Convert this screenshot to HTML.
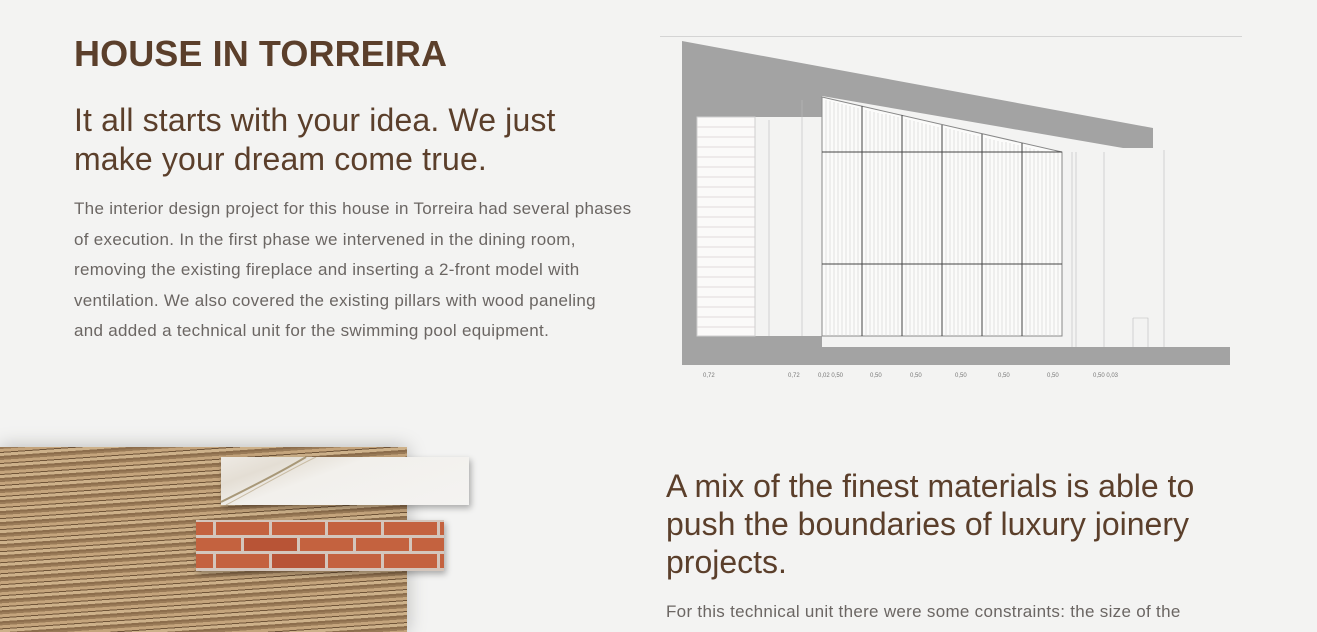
<!DOCTYPE html>
<html><head><meta charset="utf-8"><style>
html,body{margin:0;padding:0;width:1317px;height:632px;overflow:hidden;background:#f3f3f2;font-family:"Liberation Sans",sans-serif;position:relative}
.a{position:absolute;white-space:nowrap}
h1{position:absolute;left:74px;top:33px;margin:0;font-size:36px;font-weight:bold;color:#5b3f2b;letter-spacing:0.1px}
.h2{color:#5b3f2b;font-size:32px;line-height:39px;letter-spacing:0.15px}
.p{color:#6b6663;font-size:17px;line-height:30.5px;letter-spacing:0.3px}
</style></head><body>
<h1>HOUSE IN TORREIRA</h1>
<div class="a h2" style="left:74px;top:101px">It all starts with your idea. We just<br>make your dream come true.</div>
<div class="a p" style="left:74px;top:194px">The interior design project for this house in Torreira had several phases<br>of execution. In the first phase we intervened in the dining room,<br>removing the existing fireplace and inserting a 2-front model with<br>ventilation. We also covered the existing pillars with wood paneling<br>and added a technical unit for the swimming pool equipment.</div>

<svg class="a" style="left:0;top:0" width="1317" height="632">
<line x1="660" y1="36.5" x2="1242" y2="36.5" stroke="#d4d4d4"/>
<path d="M682 41 L1153 128 L1153 148 L1123 148 L822 96 L822 117 L697 117 L697 336 L822 336 L822 347 L1230 347 L1230 365 L682 365 Z" fill="#a3a3a3"/>
<rect x="697" y="117" width="58" height="219" fill="#fbfaf9" stroke="#cfcfcf"/>
<g stroke="#d8d0cf" stroke-width="0.7">
<path d="M697 127H755M697 137H755M697 147H755M697 157H755M697 167H755M697 177H755M697 187H755M697 197H755M697 207H755M697 217H755M697 227H755M697 237H755M697 247H755M697 257H755M697 267H755M697 277H755M697 287H755M697 297H755M697 307H755M697 317H755M697 327H755"/>
</g>
<path d="M822 97 L1062 152 L1062 336 L822 336 Z" fill="#fbfbfa" stroke="#888"/>
<g stroke="#cfcfcf" stroke-width="0.6">
<path d="M826 100V336M830 101V336M834 102V336M838 103V336M842 104V336M846 105V336M850 106V336M854 107V336M858 108V336M866 110V336M870 111V336M874 112V336M878 113V336M882 114V336M886 114V336M890 115V336M894 116V336M898 117V336M906 119V336M910 120V336M914 121V336M918 122V336M922 123V336M926 124V336M930 125V336M934 126V336M938 127V336M946 128V336M950 129V336M954 130V336M958 131V336M962 132V336M966 133V336M970 134V336M974 135V336M978 136V336M986 138V336M990 139V336M994 140V336M998 141V336M1002 142V336M1006 142V336M1010 143V336M1014 144V336M1018 145V336M1026 147V336M1030 148V336M1034 149V336M1038 150V336M1042 151V336M1046 152V336M1050 152V336M1054 152V336M1058 152V336"/>
</g>
<g stroke="#444" stroke-width="1">
<path d="M822 152H1062M822 264H1062M862 106V336M902 115V336M942 125V336M982 134V336M1022 143V336"/>
</g>
<g stroke="#bbb" stroke-width="0.6" fill="none">
<path d="M1072 152V347M1076 152V347M1133 318H1148V347M1133 318V347M1104 152V347"/>
<path d="M769 120V336M802 100V336M1164 150V347"/>
</g>
<g font-size="6" fill="#777" font-family="Liberation Sans">
<text x="703" y="377">0,72</text><text x="788" y="377">0,72</text><text x="818" y="377">0,02 0,50</text><text x="870" y="377">0,50</text><text x="910" y="377">0,50</text><text x="955" y="377">0,50</text><text x="998" y="377">0,50</text><text x="1047" y="377">0,50</text><text x="1093" y="377">0,50 0,03</text>
</g>
</svg>

<div class="a" style="left:0;top:447px;width:407px;height:185px;background:repeating-linear-gradient(176deg,#9a7b58 0 2px,#c4a47c 2px 5px,#6f5438 5px 6px,#cdb18a 6px 9px,#8c6d4c 9px 11px);box-shadow:0 0 18px rgba(0,0,0,.25)"></div>
<div class="a" style="left:221px;top:457px;width:248px;height:48px;background:linear-gradient(160deg,#eeeae4 0,#e4ded4 20%,#f2f0ec 40%,#f4f3f1 100%);box-shadow:2px 3px 6px rgba(0,0,0,.3)"></div>
<svg class="a" style="left:221px;top:457px" width="248" height="48"><path d="M0 45 C30 30 60 15 85 0" stroke="#a89878" stroke-width="2" fill="none"/><path d="M5 48 C35 32 70 12 95 0" stroke="#c9bca4" stroke-width="1" fill="none"/></svg>
<div class="a" style="left:196px;top:520px;width:248px;height:51px;background:#d4c6bc;box-shadow:2px 3px 6px rgba(0,0,0,.3)">
<svg width="248" height="51">
<g fill="#c4623f">
<rect x="0" y="2" width="17" height="13"/><rect x="20" y="2" width="53" height="13"/><rect x="76" y="2" width="53" height="13"/><rect x="132" y="2" width="53" height="13"/><rect x="188" y="2" width="53" height="13"/><rect x="244" y="2" width="4" height="13"/>
<rect x="0" y="18" width="45" height="13"/><rect x="48" y="18" width="53" height="13" fill="#b85436"/><rect x="104" y="18" width="53" height="13"/><rect x="160" y="18" width="53" height="13"/><rect x="216" y="18" width="32" height="13"/>
<rect x="0" y="34" width="17" height="14"/><rect x="20" y="34" width="53" height="14"/><rect x="76" y="34" width="53" height="14" fill="#b85436"/><rect x="132" y="34" width="53" height="14"/><rect x="188" y="34" width="53" height="14"/><rect x="244" y="34" width="4" height="14"/>
</g></svg></div>

<div class="a h2" style="left:666px;top:467px;line-height:38px;letter-spacing:0">A mix of the finest materials is able to<br>push the boundaries of luxury joinery<br>projects.</div>
<div class="a p" style="left:666px;top:597px">For this technical unit there were some constraints: the size of the</div>
</body></html>
